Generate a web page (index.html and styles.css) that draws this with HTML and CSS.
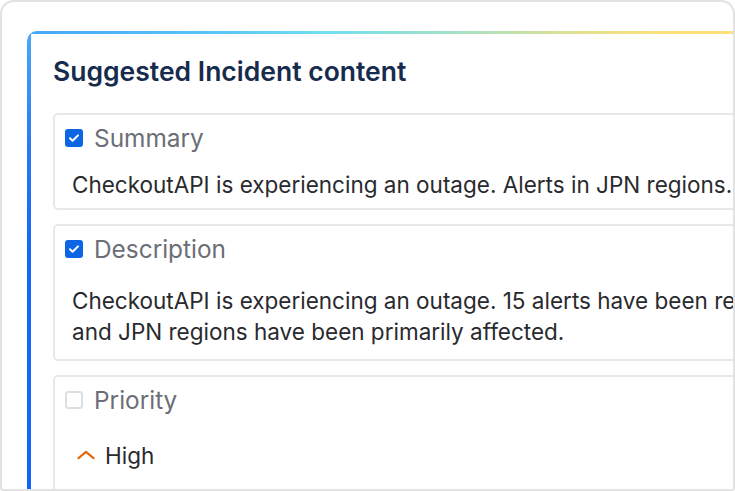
FILE: index.html
```html
<!DOCTYPE html>
<html lang="en">
<head>
  <meta charset="UTF-8">
  <title>Suggested Incident content</title>
  <link rel="stylesheet" href="styles.css">
</head>
<body>

<!-- Outer window frame -->
<div class="frame">

  <!-- Card with gradient edge -->
  <div class="card">
    <h2 class="card-title">Suggested Incident content</h2>

    <!-- Summary -->
    <div class="field field-summary">
      <div class="field-head">
        <span class="check checked">
          <svg viewBox="0 0 18 18" width="18" height="18"><path d="M5 9.2l2.6 2.5L13 6.4" fill="none" stroke="#fff" stroke-width="2" stroke-linecap="round" stroke-linejoin="round"/></svg>
        </span>
        <span class="field-label">Summary</span>
      </div>
      <p class="field-text">CheckoutAPI is experiencing an outage. Alerts in JPN regions.</p>
    </div>

    <!-- Description -->
    <div class="field field-description">
      <div class="field-head">
        <span class="check checked">
          <svg viewBox="0 0 18 18" width="18" height="18"><path d="M5 9.2l2.6 2.5L13 6.4" fill="none" stroke="#fff" stroke-width="2" stroke-linecap="round" stroke-linejoin="round"/></svg>
        </span>
        <span class="field-label">Description</span>
      </div>
      <p class="field-text">CheckoutAPI is experiencing an outage. 15 alerts have been received<br>and JPN regions have been primarily affected.</p>
    </div>

    <!-- Priority -->
    <div class="field field-priority">
      <div class="field-head">
        <span class="check"></span>
        <span class="field-label">Priority</span>
      </div>
      <div class="priority">
        <svg class="priority-icon" viewBox="0 0 18 10" width="18" height="10"><path d="M1.5 8.2L9 1.8l7.5 6.4" fill="none" stroke="#e56910" stroke-width="2.2" stroke-linecap="round" stroke-linejoin="round"/></svg>
        <span>High</span>
      </div>
    </div>
  </div>

</div>

</body>
</html>
```

FILE: styles.css
```css
/* Page */
body {
  margin: 0;
  background: #fff;
  font-family: Inter, "Noto Sans", sans-serif;
  color: #292a2e;
}

/* Outer frame, clips the card on the right and bottom */
.frame {
  width: 735px;
  height: 491px;
  box-sizing: border-box;
  border: 2px solid #e2e2e2;
  border-radius: 14px 14px 3px 3px;
  overflow: hidden;
  padding: 29px 0 0 25px;
}

/* Card with blue left edge and rainbow top edge */
.card {
  width: 780px;
  min-height: 520px;
  box-sizing: border-box;
  border-style: solid;
  border-color: transparent;
  border-width: 3px 0 0 4px;
  border-radius: 10px 0 0 0;
  padding: 20px 0 0 22px;
  background:
    linear-gradient(#fff, #fff) padding-box,
    linear-gradient(to bottom, #4ba9f7, #2a7af6 110px, #1567fb 220px, #0f64fd) left top / 4px 100% no-repeat border-box,
    linear-gradient(to right, #46a6f8, #5bc6f5 25%, #70dff0 38%, #a6e0c6 55%, #e6e08e 72%, #fde27a 82%, #fde27a) left top / 100% 3px no-repeat border-box;
}

.card-title {
  margin: 0 0 25px;
  font-size: 26.5px;
  line-height: 34px;
  font-weight: 600;
  color: #172b4d;
}

/* Field block */
.field {
  border: 2px solid #e6e8eb;
  border-radius: 5px;
  padding: 9px 10px 8px;
  margin-bottom: 14px;
}

.field-description {
  padding-bottom: 12px;
}

.field-priority {
  padding-bottom: 30px;
}

.field-head {
  display: flex;
  align-items: center;
  gap: 11px;
  height: 28px;
}

.check {
  width: 18px;
  height: 18px;
  box-sizing: border-box;
  border: 2px solid #dcdfe4;
  border-radius: 3px;
  display: flex;
}

.check.checked {
  background: #0c66e4;
  border: none;
}

.field-label {
  font-size: 24.4px;
  color: #6b6e76;
}

.field-text {
  margin: 17px 0 0 7px;
  font-size: 22.5px;
  line-height: 31px;
  white-space: nowrap;
}

.field-description .field-text {
  margin-top: 22px;
}

/* Priority value */
.priority {
  display: flex;
  align-items: center;
  gap: 10px;
  margin: 21px 0 0 12px;
  height: 40px;
  font-size: 22.5px;
}

.priority-icon {
  flex: none;
}
```
